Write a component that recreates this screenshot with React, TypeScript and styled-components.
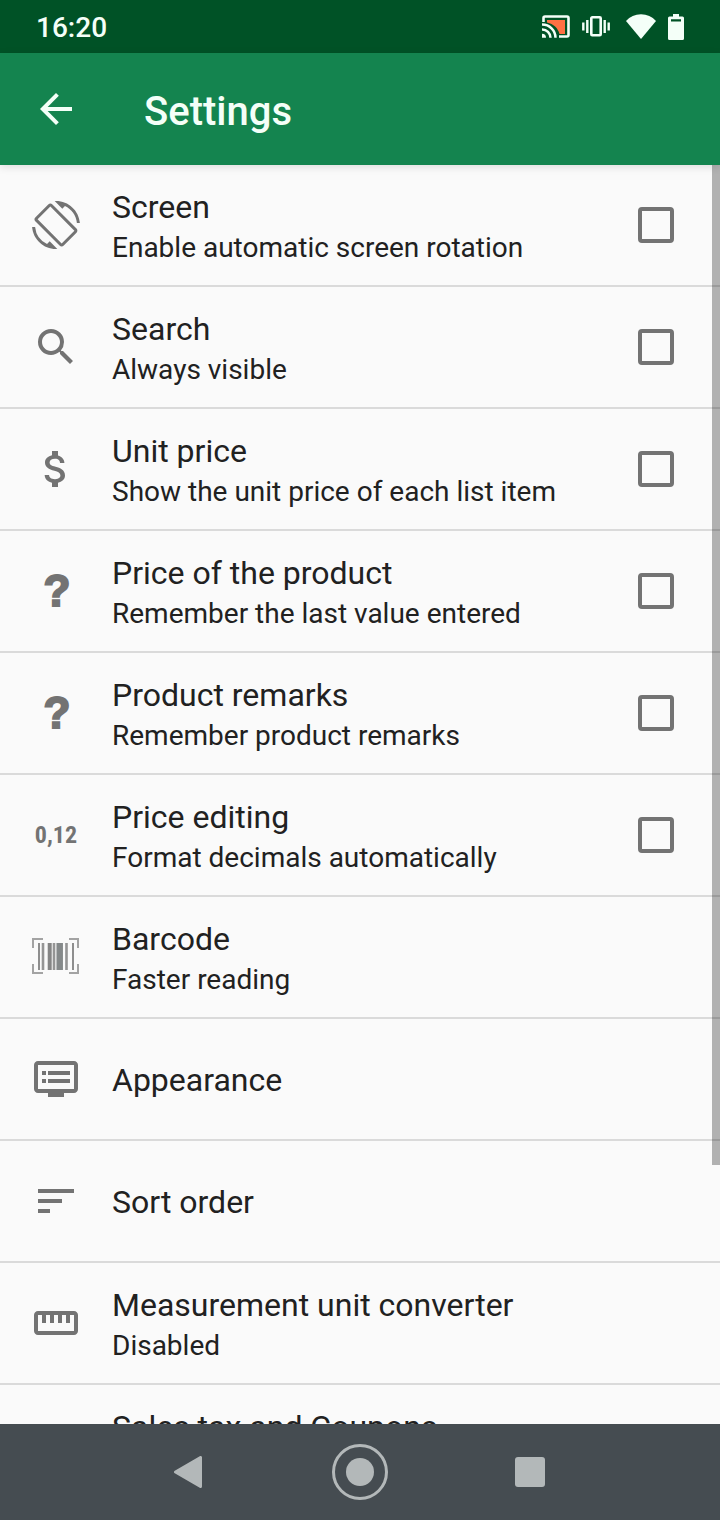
import React, { useState } from 'react';
import styled, { createGlobalStyle, css } from 'styled-components';
import {
  MdArrowBack,
  MdAttachMoney,
  MdDvr,
  MdScreenRotation,
  MdSearch,
  MdSort,
  MdStraighten,
} from 'react-icons/md';

const GlobalStyle = createGlobalStyle`
  *, *::before, *::after { box-sizing: border-box; }
  body {
    margin: 0;
    background: #fafafa;
    color: #212121;
    font-family: Roboto, "Liberation Sans", sans-serif;
  }
`;

const Screen = styled.div`
  display: flex;
  flex-direction: column;
  height: 100vh;
`;

const StatusBar = styled.div`
  flex: none;
  display: flex;
  align-items: center;
  justify-content: space-between;
  height: 53px;
  padding: 0 36px;
  background: #005226;
  color: #f4fff8;
`;

const Clock = styled.time`
  padding-top: 2px;
  font-size: 28px;
  line-height: 32px;
  font-weight: 500;
`;

const StatusIcons = styled.div`
  display: flex;
  align-items: center;
  gap: 12px;

  svg { display: block; }
`;

const AppBar = styled.header`
  flex: none;
  position: relative;
  z-index: 1;
  display: flex;
  align-items: center;
  gap: 64px;
  height: 112px;
  padding: 0 32px;
  background: #14844f;
  color: #f4fff8;
  box-shadow: 0 2px 8px rgba(0, 0, 0, 0.12);
`;

const BackButton = styled.button`
  display: flex;
  padding: 0;
  border: 0;
  background: none;
  color: inherit;
  cursor: pointer;
`;

const PageTitle = styled.h1`
  margin: 0;
  padding-top: 6px;
  font-size: 40px;
  line-height: 48px;
  font-weight: 500;
`;

const Content = styled.main`
  flex: 1;
  min-height: 0;
  position: relative;
`;

const SettingsList = styled.ul`
  height: 100%;
  margin: 0;
  padding: 0;
  list-style: none;
  overflow-y: auto;
  scrollbar-width: none;
`;

const ScrollThumb = styled.div`
  position: absolute;
  top: 0;
  right: 0;
  width: 8px;
  height: 1000px;
  max-height: 100%;
  background: rgba(0, 0, 0, 0.29);
  pointer-events: none;
`;

const Item = styled.li`
  border-bottom: 2px solid #dadada;
`;

const rowStyles = css`
  display: flex;
  align-items: center;
  gap: 32px;
  width: 100%;
  min-height: 120px;
  padding: 0 46px 0 32px;
  border: 0;
  background: none;
  color: inherit;
  font-family: inherit;
  text-align: left;
  cursor: pointer;
`;

const ToggleRow = styled.label`
  ${rowStyles}
`;

const LinkRow = styled.button`
  ${rowStyles}
`;

const IconSlot = styled.span`
  flex: none;
  display: flex;
  align-items: center;
  justify-content: center;
  width: 48px;
  height: 48px;
  color: #737373;
`;

const QuestionGlyph = styled.span`
  padding-left: 2px;
  font-family: "Liberation Sans", sans-serif;
  font-size: 44px;
  line-height: 48px;
  font-weight: 700;
  -webkit-text-stroke: 2px currentColor;
`;

const DecimalGlyph = styled.span`
  font-family: "Roboto Condensed", Roboto, sans-serif;
  font-size: 24px;
  line-height: 48px;
  font-weight: 700;
`;

const Labels = styled.span`
  flex: 1;
  display: flex;
  flex-direction: column;
  min-width: 0;
  padding-top: 2px;
`;

const Title = styled.span`
  font-size: 32px;
  line-height: 44px;
`;

const Summary = styled.span`
  min-height: 38px;
  font-size: 28px;
  line-height: 38px;
`;

const CheckBox = styled.input`
  flex: none;
  appearance: none;
  width: 36px;
  height: 36px;
  margin: 0;
  border: 4px solid #737373;
  border-radius: 4px;

  &:checked {
    border-color: #14844f;
    background: #14844f;
  }
`;

const NavBar = styled.nav`
  flex: none;
  display: flex;
  align-items: center;
  justify-content: center;
  gap: 74px;
  height: 96px;
  background: #454c51;
`;

const NavButton = styled.button`
  display: flex;
  align-items: center;
  justify-content: center;
  width: 96px;
  height: 96px;
  padding: 0;
  border: 0;
  background: none;
  color: #b3b8b9;
  cursor: pointer;
`;

const CastIcon = () => (
  <svg width="28" height="26" viewBox="1 0 28 26" fill="none" aria-hidden="true">
    <path d="M6 6H24V20H18.5C17 14 12.5 10 6 8.5Z" fill="#ff7043" />
    <path d="M2.5 8V4Q2.5 2.500 4 2.500H26Q27.500 2.500 27.500 4V21Q27.500 22.500 26 22.500H18" stroke="currentColor" strokeWidth="2.600" />
    <path d="M1 10.500A13.300 13.300 0 0 1 14.500 23.800M1 15.500A8.300 8.300 0 0 1 9.500 23.800" stroke="currentColor" strokeWidth="2.500" />
    <path d="M1 19.800A4 4 0 0 1 5 23.800H1Z" fill="currentColor" />
  </svg>
);

const VibrateIcon = () => (
  <svg width="32" height="26" viewBox="1 0 32 26" fill="none" stroke="currentColor" aria-hidden="true">
    <rect x="10.300" y="3.300" width="9.400" height="18" rx="1" strokeWidth="2.600" />
    <path d="M2.300 8.500V16.500M27.700 8.500V16.500M6.300 6V19M23.700 6V19" strokeWidth="2.400" />
  </svg>
);

const WifiIcon = () => (
  <svg width="30" height="26" viewBox="1 0 30 26" aria-hidden="true">
    <path d="M16 25L1 7C5 2.500 10 .3 16 .3S27 2.500 31 7Z" fill="currentColor" />
  </svg>
);

const BatteryIcon = () => (
  <svg width="16" height="26" viewBox="1 0 16 26" aria-hidden="true">
    <path d="M6 0H12V2.500H15.500Q17 2.500 17 4V24.500Q17 26 15.500 26H2.500Q1 26 1 24.500V4Q1 2.500 2.500 2.500H6ZM4 5.200V7.400H14V5.200Z" fillRule="evenodd" fill="currentColor" />
  </svg>
);

const BarcodeIcon = () => (
  <svg width="48" height="48" viewBox="0 0 48 48" fill="none" aria-hidden="true">
    <path d="M1 15V6H11M37 6H46V15M46 31V40H37M11 40H1V31" stroke="#a3a3a3" strokeWidth="2" />
    <path d="M7 10V37M41 10V37" stroke="#8e8e8e" strokeWidth="2" />
    <path d="M11 10V37M22 10V37M34.500 10V37" stroke="#959595" strokeWidth="2.600" />
    <path d="M17.700 10V37" stroke="#858585" strokeWidth="4" />
    <path d="M27.700 10V37" stroke="#85898a" strokeWidth="6.500" />
  </svg>
);

type Setting = {
  title: string;
  summary?: string;
  icon?: React.ReactNode;
  toggle?: boolean;
};

const settings: Setting[] = [
  { title: 'Screen', summary: 'Enable automatic screen rotation', icon: <MdScreenRotation size={48} />, toggle: true },
  { title: 'Search', summary: 'Always visible', icon: <MdSearch size={48} />, toggle: true },
  { title: 'Unit price', summary: 'Show the unit price of each list item', icon: <MdAttachMoney size={48} />, toggle: true },
  { title: 'Price of the product', summary: 'Remember the last value entered', icon: <QuestionGlyph>?</QuestionGlyph>, toggle: true },
  { title: 'Product remarks', summary: 'Remember product remarks', icon: <QuestionGlyph>?</QuestionGlyph>, toggle: true },
  { title: 'Price editing', summary: 'Format decimals automatically', icon: <DecimalGlyph>0,12</DecimalGlyph>, toggle: true },
  { title: 'Barcode', summary: 'Faster reading', icon: <BarcodeIcon /> },
  { title: 'Appearance', icon: <MdDvr size={48} /> },
  { title: 'Sort order', icon: <MdSort size={48} /> },
  { title: 'Measurement unit converter', summary: 'Disabled', icon: <MdStraighten size={48} /> },
  { title: 'Sales tax and Coupons', summary: '' },
];

function SettingRow({ title, summary, icon, toggle }: Setting) {
  const [checked, setChecked] = useState(false);
  const body = (
    <>
      <IconSlot aria-hidden="true">{icon}</IconSlot>
      <Labels>
        <Title>{title}</Title>
        {summary !== undefined && <Summary>{summary}</Summary>}
      </Labels>
    </>
  );

  return (
    <Item>
      {toggle ? (
        <ToggleRow>
          {body}
          <CheckBox type="checkbox" checked={checked} onChange={(e) => setChecked(e.target.checked)} />
        </ToggleRow>
      ) : (
        <LinkRow type="button">{body}</LinkRow>
      )}
    </Item>
  );
}

export default function App() {
  return (
    <Screen>
      <GlobalStyle />
      <StatusBar>
        <Clock>16:20</Clock>
        <StatusIcons>
          <CastIcon />
          <VibrateIcon />
          <WifiIcon />
          <BatteryIcon />
        </StatusIcons>
      </StatusBar>
      <AppBar>
        <BackButton type="button" aria-label="Back">
          <MdArrowBack size={48} />
        </BackButton>
        <PageTitle>Settings</PageTitle>
      </AppBar>
      <Content>
        <SettingsList>
          {settings.map((setting) => (
            <SettingRow key={setting.title} {...setting} />
          ))}
        </SettingsList>
        <ScrollThumb />
      </Content>
      <NavBar>
        <NavButton type="button" aria-label="Back">
          <svg width="32" height="32" viewBox="0 0 32 32" fill="currentColor" stroke="currentColor" strokeWidth="3" strokeLinejoin="round">
            <path d="M1.500 16L26.500 1.500V30.500Z" />
          </svg>
        </NavButton>
        <NavButton type="button" aria-label="Home">
          <svg width="58" height="58" viewBox="0 0 58 58">
            <circle cx="29" cy="29" r="26.500" fill="none" stroke="currentColor" strokeWidth="3" />
            <circle cx="29" cy="29" r="14" fill="currentColor" />
          </svg>
        </NavButton>
        <NavButton type="button" aria-label="Recent apps">
          <svg width="30" height="30" viewBox="0 0 30 30">
            <rect width="30" height="30" rx="3" fill="currentColor" />
          </svg>
        </NavButton>
      </NavBar>
    </Screen>
  );
}
